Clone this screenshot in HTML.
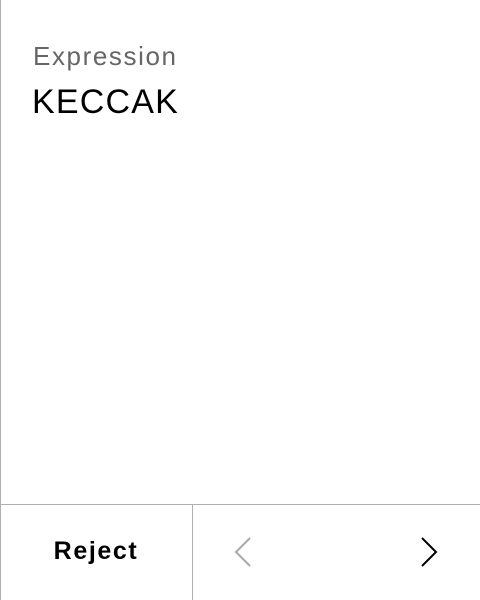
<!DOCTYPE html>
<html><head><style>
html,body{margin:0;padding:0;width:480px;height:600px;background:#fff;overflow:hidden;font-family:"Liberation Sans",sans-serif;}
.l{position:absolute;left:0;top:0;width:1px;height:600px;background:#b0b0b0;}
.h{position:absolute;left:0;top:504px;width:480px;height:1px;background:#b0b0b0;}
.v{position:absolute;left:192px;top:504px;width:1px;height:96px;background:#b0b0b0;}
.t1{position:absolute;left:33px;top:40px;font-size:26px;color:#666;line-height:32px;letter-spacing:1.6px;}
.t2{position:absolute;left:32px;top:82px;font-size:34px;color:#000;line-height:40px;letter-spacing:1.2px;}
.r{position:absolute;left:0;top:534px;width:192px;text-align:center;font-size:25px;font-weight:bold;line-height:34px;letter-spacing:1.6px;}
svg{position:absolute;}
</style></head><body>
<div class="l"></div><div class="h"></div><div class="v"></div>
<div class="t1">Expression</div>
<div class="t2">KECCAK</div>
<div class="r">Reject</div>
<svg style="left:230px;top:535px" width="26" height="34"><path d="M20 3 L6 17 L20 31" fill="none" stroke="#aaa" stroke-width="2"/></svg>
<svg style="left:416px;top:535px" width="26" height="34"><path d="M6 3 L20 17 L6 31" fill="none" stroke="#000" stroke-width="2"/></svg>
</body></html>
